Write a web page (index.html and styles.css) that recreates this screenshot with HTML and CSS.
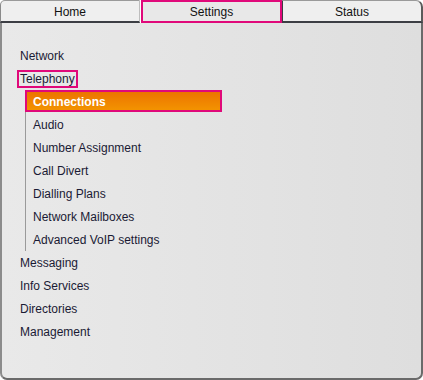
FILE: index.html
```html
<!DOCTYPE html>
<html lang="en">
<head>
    <meta charset="UTF-8">
    <meta name="viewport" content="width=device-width, initial-scale=1.0">
    <title>Settings</title>
    <link rel="stylesheet" href="styles.css">
</head>
<body>
    <div class="tabs">
        <div class="tab tab-first">Home</div>
        <div class="tab tab-active">Settings</div>
        <div class="tab tab-last">Status</div>
    </div>

    <div class="panel">
        <ul class="menu">
            <li><span class="item">Network</span></li>
            <li><span class="item item-focus">Telephony</span>
                <ul class="submenu">
                    <li class="sub-active"><span class="item">Connections</span></li>
                    <li><span class="item">Audio</span></li>
                    <li><span class="item">Number Assignment</span></li>
                    <li><span class="item">Call Divert</span></li>
                    <li><span class="item">Dialling Plans</span></li>
                    <li><span class="item">Network Mailboxes</span></li>
                    <li><span class="item">Advanced VoIP settings</span></li>
                </ul>
            </li>
            <li><span class="item">Messaging</span></li>
            <li><span class="item">Info Services</span></li>
            <li><span class="item">Directories</span></li>
            <li><span class="item">Management</span></li>
        </ul>
    </div>
</body>
</html>
```

FILE: styles.css
```css
* {
    box-sizing: border-box;
    margin: 0;
    padding: 0;
}

body {
    background-color: #fff;
    font-family: "Liberation Sans", Arial, sans-serif;
    font-size: 12px;
    color: #1a1a34;
    width: 423px;
    height: 380px;
}

.tabs {
    display: flex;
    height: 23px;
}

.tab {
    width: 141px;
    height: 23px;
    padding-top: 1px;
    line-height: 20px;
    text-align: center;
    color: #111;
    background-color: #efefef;
    border-top: 1px solid #9a9a9a;
    border-bottom: 2px solid #3c3e44;
}

.tab-first {
    width: 140px;
    border-left: 1px solid #8a8a8a;
    border-right: 1px solid #bdbdbd;
    border-top-left-radius: 5px;
    margin-right: 1px;
}

.tab-active {
    background-color: #e8e8e8;
    border: 2px solid #e0097a;
    padding-top: 1px;
    line-height: 18px;
}

.tab-last {
    border-left: 1px solid #3c3e44;
    border-right: 2px solid #5a5a5a;
    border-top-right-radius: 7px;
}

.panel {
    height: 357px;
    background: linear-gradient(to right, #e9e9e9, #dedede);
    border-left: 2px solid #8c8c8c;
    border-right: 2px solid #6a6a6a;
    border-bottom: 2px solid #6a6a6a;
    border-radius: 0 0 7px 7px;
    padding-top: 21px;
    padding-left: 18px;
}

.menu, .submenu {
    list-style: none;
}

.menu > li > .item {
    display: inline-block;
    height: 23px;
    padding-top: 2px;
    line-height: 21px;
}

.menu > li > .item-focus {
    margin-left: -3px;
    padding: 0 1px;
    border: 2px solid #e0097a;
    height: 18px;
    line-height: 15px;
    margin-top: 2.5px;
    margin-bottom: 2.5px;
    vertical-align: top;
}

.submenu {
    margin-left: 5px;
    border-left: 1px solid #9a9a9a;
}

.submenu li {
    height: 23px;
    padding-top: 2px;
    line-height: 21px;
    padding-left: 7px;
}

.submenu .sub-active {
    margin-left: -1px;
    width: 197px;
    padding-left: 6px;
    padding-top: 1px;
    border: 2px solid #e0097a;
    background: linear-gradient(to bottom, #ec7400, #f39300);
    color: #fff;
    font-weight: bold;
    line-height: 18px;
    height: 22px;
    margin-bottom: 1px;
}
```
